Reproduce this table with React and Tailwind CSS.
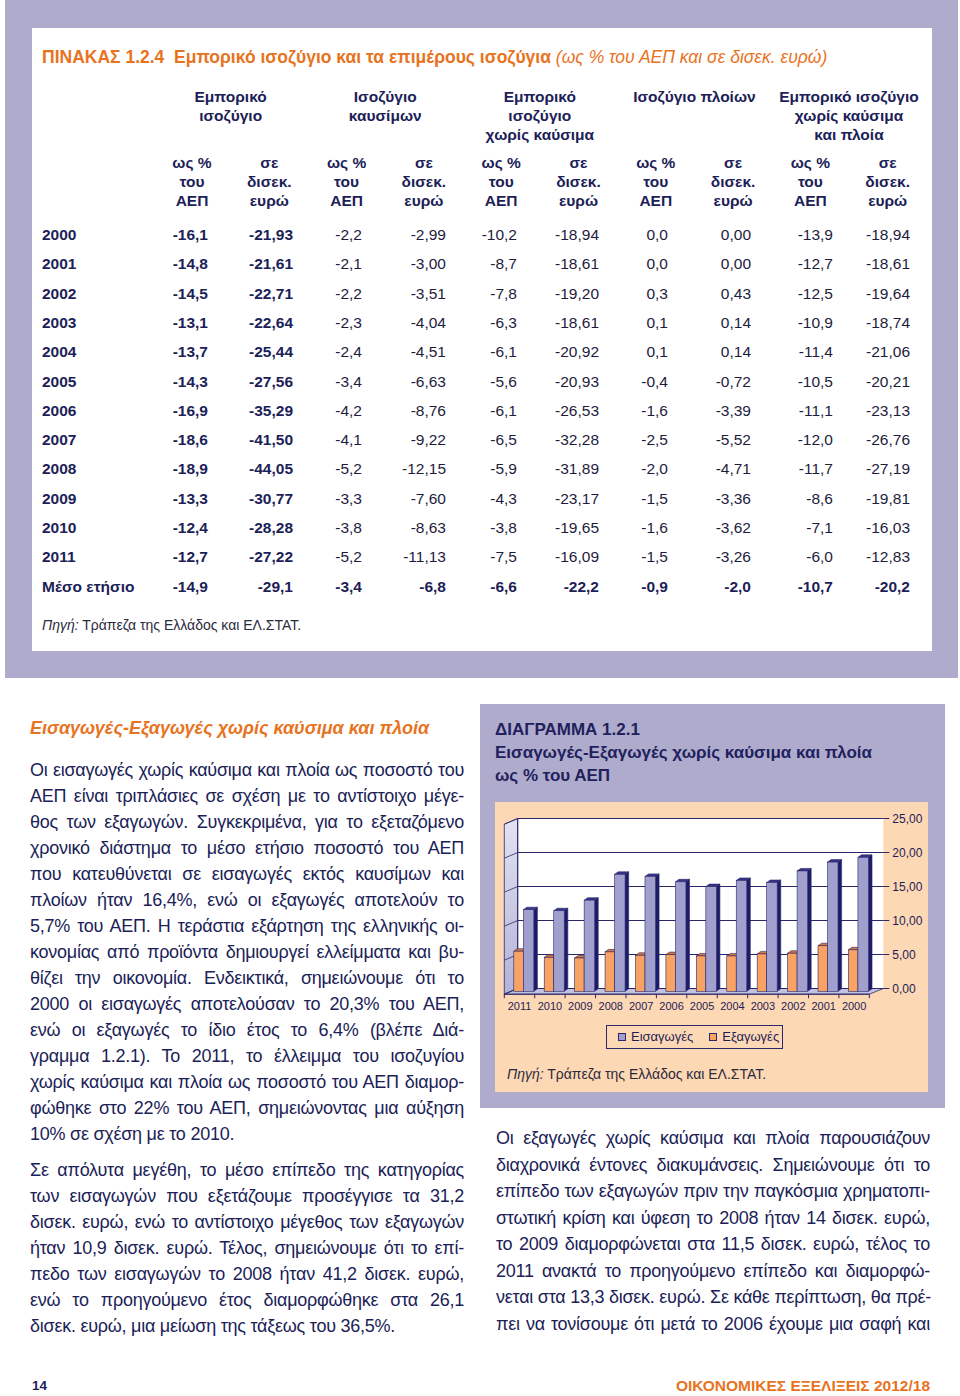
import React from 'react';

const ROWS = [
  ['2000', '-16,1', '-21,93', '-2,2', '-2,99', '-10,2', '-18,94', '0,0', '0,00', '-13,9', '-18,94'],
  ['2001', '-14,8', '-21,61', '-2,1', '-3,00', '-8,7', '-18,61', '0,0', '0,00', '-12,7', '-18,61'],
  ['2002', '-14,5', '-22,71', '-2,2', '-3,51', '-7,8', '-19,20', '0,3', '0,43', '-12,5', '-19,64'],
  ['2003', '-13,1', '-22,64', '-2,3', '-4,04', '-6,3', '-18,61', '0,1', '0,14', '-10,9', '-18,74'],
  ['2004', '-13,7', '-25,44', '-2,4', '-4,51', '-6,1', '-20,92', '0,1', '0,14', '-11,4', '-21,06'],
  ['2005', '-14,3', '-27,56', '-3,4', '-6,63', '-5,6', '-20,93', '-0,4', '-0,72', '-10,5', '-20,21'],
  ['2006', '-16,9', '-35,29', '-4,2', '-8,76', '-6,1', '-26,53', '-1,6', '-3,39', '-11,1', '-23,13'],
  ['2007', '-18,6', '-41,50', '-4,1', '-9,22', '-6,5', '-32,28', '-2,5', '-5,52', '-12,0', '-26,76'],
  ['2008', '-18,9', '-44,05', '-5,2', '-12,15', '-5,9', '-31,89', '-2,0', '-4,71', '-11,7', '-27,19'],
  ['2009', '-13,3', '-30,77', '-3,3', '-7,60', '-4,3', '-23,17', '-1,5', '-3,36', '-8,6', '-19,81'],
  ['2010', '-12,4', '-28,28', '-3,8', '-8,63', '-3,8', '-19,65', '-1,6', '-3,62', '-7,1', '-16,03'],
  ['2011', '-12,7', '-27,22', '-5,2', '-11,13', '-7,5', '-16,09', '-1,5', '-3,26', '-6,0', '-12,83'],
];
const MEAN = ['Μέσο ετήσιο', '-14,9', '-29,1', '-3,4', '-6,8', '-6,6', '-22,2', '-0,9', '-2,0', '-10,7', '-20,2'];

const GROUPS = [
  ['Εμπορικό', 'ισοζύγιο'],
  ['Ισοζύγιο', 'καυσίμων'],
  ['Εμπορικό', 'ισοζύγιο', 'χωρίς καύσιμα'],
  ['Ισοζύγιο πλοίων'],
  ['Εμπορικό ισοζύγιο', 'χωρίς καύσιμα', 'και πλοία'],
];

const LEFT_P1 = [
  'Οι εισαγωγές χωρίς καύσιμα και πλοία ως ποσοστό του',
  'ΑΕΠ είναι τριπλάσιες σε σχέση με το αντίστοιχο μέγε-',
  'θος των εξαγωγών. Συγκεκριμένα, για το εξεταζόμενο',
  'χρονικό διάστημα το μέσο ετήσιο ποσοστό του ΑΕΠ',
  'που κατευθύνεται σε εισαγωγές εκτός καυσίμων και',
  'πλοίων ήταν 16,4%, ενώ οι εξαγωγές αποτελούν το',
  '5,7% του ΑΕΠ. Η τεράστια εξάρτηση της ελληνικής οι-',
  'κονομίας από προϊόντα δημιουργεί ελλείμματα και βυ-',
  'θίζει την οικονομία. Ενδεικτικά, σημειώνουμε ότι το',
  '2000 οι εισαγωγές αποτελούσαν το 20,3% του ΑΕΠ,',
  'ενώ οι εξαγωγές το ίδιο έτος το 6,4% (βλέπε Διά-',
  'γραμμα 1.2.1). Το 2011, το έλλειμμα του ισοζυγίου',
  'χωρίς καύσιμα και πλοία ως ποσοστό του ΑΕΠ διαμορ-',
  'φώθηκε στο 22% του ΑΕΠ, σημειώνοντας μια αύξηση',
  '10% σε σχέση με το 2010.',
];
const LEFT_P2 = [
  'Σε απόλυτα μεγέθη, το μέσο επίπεδο της κατηγορίας',
  'των εισαγωγών που εξετάζουμε προσέγγισε τα 31,2',
  'δισεκ. ευρώ, ενώ το αντίστοιχο μέγεθος των εξαγωγών',
  'ήταν 10,9 δισεκ. ευρώ. Τέλος, σημειώνουμε ότι το επί-',
  'πεδο των εισαγωγών το 2008 ήταν 41,2 δισεκ. ευρώ,',
  'ενώ το προηγούμενο έτος διαμορφώθηκε στα 26,1',
  'δισεκ. ευρώ, μια μείωση της τάξεως του 36,5%.',
];
const RIGHT_P = [
  'Οι εξαγωγές χωρίς καύσιμα και πλοία παρουσιάζουν',
  'διαχρονικά έντονες διακυμάνσεις. Σημειώνουμε ότι το',
  'επίπεδο των εξαγωγών πριν την παγκόσμια χρηματοπι-',
  'στωτική κρίση και ύφεση το 2008 ήταν 14 δισεκ. ευρώ,',
  'το 2009 διαμορφώνεται στα 11,5 δισεκ. ευρώ, τέλος το',
  '2011 ανακτά το προηγούμενο επίπεδο και διαμορφώ-',
  'νεται στα 13,3 δισεκ. ευρώ. Σε κάθε περίπτωση, θα πρέ-',
  'πει να τονίσουμε ότι μετά το 2006 έχουμε μια σαφή και',
];

// chart data, years right to left as printed
const YEARS = ['2011', '2010', '2009', '2008', '2007', '2006', '2005', '2004', '2003', '2002', '2001', '2000'];
const IMP = [12.0, 11.85, 13.4, 17.2, 16.9, 16.1, 15.4, 16.3, 16.0, 17.7, 19.0, 19.7];
const EXP = [5.9, 5.0, 4.9, 5.8, 5.3, 5.4, 5.2, 5.2, 5.5, 5.6, 6.7, 6.1];

function Lines({ lines, last = true, className }) {
  return (
    <div className={className}>
      {lines.map((l, i) => (
        <div
          key={i}
          className={`whitespace-nowrap text-justify ${i === lines.length - 1 && last ? '' : '[text-align-last:justify]'}`}
        >
          {l}
        </div>
      ))}
    </div>
  );
}

function Bar({ x, w, v, front, side, top }) {
  const yb = 189.3;
  const h = v * 6.8;
  const y = yb - h;
  const dx = 3.6, dy = 2.5;
  return (
    <g stroke="#2a2868" strokeWidth="0.6">
      <polygon points={`${x + w},${y} ${x + w + dx},${y - dy} ${x + w + dx},${yb - dy} ${x + w},${yb}`} fill={side} />
      <polygon points={`${x},${y} ${x + dx},${y - dy} ${x + w + dx},${y - dy} ${x + w},${y}`} fill={top} />
      <rect x={x} y={y} width={w} height={h} fill={front} />
    </g>
  );
}

function Chart() {
  const S = 6.8, BY = 186.5, BX0 = 22.7, BX1 = 388.3, FX = 9.3, FY = 192.2, W = 30.42;
  const grid = [0, 5, 10, 15, 20, 25];
  return (
    <svg width="433" height="214" viewBox="0 0 433 214" className="block">
      <defs>
        <linearGradient id="wall" x1="0" y1="0" x2="0" y2="1">
          <stop offset="0" stopColor="#e2e2f1" />
          <stop offset="1" stopColor="#b3b2d8" />
        </linearGradient>
      </defs>
      <rect x={BX0} y={BY - 25 * S} width={BX1 - BX0} height={25 * S} fill="#ffffff" />
      <polygon points={`${FX},${BY - 25 * S + 5.7} ${BX0},${BY - 25 * S} ${BX0},${BY} ${FX},${FY}`} fill="url(#wall)" stroke="#2a2868" strokeWidth="0.8" />
      <polygon points={`${FX},${FY} ${BX0},${BY} ${BX1},${BY} ${FX + 12 * W},${FY}`} fill="#c3c2e3" stroke="#2a2868" strokeWidth="0.8" />
      {grid.map((g) => {
        const y = BY - g * S;
        return (
          <g key={g}>
            <line x1={BX0} y1={y} x2={BX1} y2={y} stroke="#2a2868" strokeWidth="1" />
            <line x1={FX} y1={y + 5.7} x2={BX0} y2={y} stroke="#2a2868" strokeWidth="0.8" />
            <line x1={BX1} y1={y} x2={BX1 + 6} y2={y} stroke="#2a2868" strokeWidth="1" />
            <text x={BX1 + 9} y={y + 4.3} fontSize="12" fill="#1f1d55" fontFamily="Liberation Sans, Arial, sans-serif">
              {g === 0 ? '0,00' : `${g},00`}
            </text>
          </g>
        );
      })}
      <line x1={BX0} y1={BY - 25 * S} x2={BX0} y2={BY} stroke="#2a2868" strokeWidth="1" />
      {YEARS.map((yr, i) => {
        const t = FX + W * i;
        return (
          <g key={yr}>
            <Bar x={t + 9.5} w={9.5} v={EXP[i]} front="#f8a263" side="#b8653a" top="#d9763f" />
            <Bar x={t + 19} w={10.5} v={IMP[i]} front="#a09fce" side="#1d1b6a" top="#35338a" />
          </g>
        );
      })}
      <line x1={FX} y1={FY} x2={FX + 12 * W} y2={FY} stroke="#2a2868" strokeWidth="1" />
      {Array.from({ length: 13 }).map((_, i) => (
        <line key={i} x1={FX + W * i} y1={FY} x2={FX + W * i} y2={FY + 4} stroke="#2a2868" strokeWidth="1" />
      ))}
      {YEARS.map((yr, i) => (
        <text key={yr} x={FX + W * (i + 0.5)} y={208} fontSize="11" textAnchor="middle" fill="#1f1d55" fontFamily="Liberation Sans, Arial, sans-serif">
          {yr}
        </text>
      ))}
    </svg>
  );
}

export default function App() {
  return (
    <div className="w-[960px] h-[1396px] bg-white text-[#201e57] font-['Liberation_Sans',Arial,sans-serif] relative overflow-hidden">
      {/* table block */}
      <section className="ml-[5px] w-[953px] bg-[#aeabcd] pt-[28px] pl-[27px] pr-[26px] pb-[27px]">
        <div className="bg-white h-[623px] pl-[10px] pt-[19px]">
          <h1 className="text-[17.5px] leading-[20px] text-[#e8731e] whitespace-nowrap">
            <span className="font-bold">ΠΙΝΑΚΑΣ 1.2.4&nbsp;&nbsp;Εμπορικό ισοζύγιο και τα επιμέρους ισοζύγια</span>{' '}
            <span className="italic">(ως % του ΑΕΠ και σε δισεκ. ευρώ)</span>
          </h1>

          <div className="grid grid-cols-[111.35px_repeat(10,77.3px)] mt-[20px] text-[15.5px] leading-[19px] font-bold text-center">
            <div />
            {GROUPS.map((g, i) => (
              <div key={i} className="col-span-2">
                {g.map((l) => (
                  <div key={l}>{l}</div>
                ))}
              </div>
            ))}
          </div>
          <div className="grid grid-cols-[111.35px_repeat(10,77.3px)] mt-[9px] text-[15.5px] leading-[19px] font-bold text-center">
            <div />
            {Array.from({ length: 5 }).map((_, i) => (
              <React.Fragment key={i}>
                <div>ως %<br />του<br />ΑΕΠ</div>
                <div>σε<br />δισεκ.<br />ευρώ</div>
              </React.Fragment>
            ))}
          </div>

          <div className="mt-[10px] text-[15.5px]">
            {ROWS.map((r) => (
              <div key={r[0]} className="grid grid-cols-[98px_68px_85px_69px_84px_71px_82px_69px_83px_82px_77px] h-[29.3px] items-center text-right">
                {r.map((c, j) => (
                  <div key={j} className={`${j === 0 ? 'text-left font-bold' : ''} ${j === 1 || j === 2 ? 'font-bold' : ''} ${j > 2 ? 'text-[#1d1c3c]' : ''}`}>
                    {c}
                  </div>
                ))}
              </div>
            ))}
            <div className="grid grid-cols-[98px_68px_85px_69px_84px_71px_82px_69px_83px_82px_77px] h-[29.3px] items-center text-right font-bold">
              {MEAN.map((c, j) => (
                <div key={j} className={j === 0 ? 'text-left whitespace-nowrap' : ''}>{c}</div>
              ))}
            </div>
          </div>

          <p className="mt-[15px] text-[14px] leading-[18px] text-[#2b2a3c]">
            <span className="italic">Πηγή:</span> Τράπεζα της Ελλάδος και ΕΛ.ΣΤΑΤ.
          </p>
        </div>
      </section>

      {/* text + chart */}
      <div className="flex mt-[26px]">
        <div className="ml-[30px] w-[434px] pt-[12px]">
          <h2 className="text-[18px] leading-[24px] font-bold italic text-[#e8731e]">
            Εισαγωγές-Εξαγωγές χωρίς καύσιμα και πλοία
          </h2>
          <Lines lines={LEFT_P1} className="mt-[17px] text-[18px] leading-[26px] tracking-[-0.25px]" />
          <Lines lines={LEFT_P2} className="mt-[10px] text-[18px] leading-[26px] tracking-[-0.25px]" />
        </div>

        <div className="ml-[16px] w-[465px]">
          <div className="bg-[#aeabcd] pt-[14px] pl-[15px] pr-[17px] pb-[16px]">
            <div className="text-[17px] leading-[23px] font-bold text-[#211f5c]">
              <div>ΔΙΑΓΡΑΜΜΑ 1.2.1</div>
              <div>Εισαγωγές-Εξαγωγές χωρίς καύσιμα και πλοία</div>
              <div>ως % του ΑΕΠ</div>
            </div>
            <div className="mt-[15px] h-[290px] bg-[#fdd8b5]">
              <Chart />
              <div className="mt-[9px] ml-[111px] w-[177px] h-[24px] border border-[#2a2868] flex items-center pl-[11px] text-[13px] text-[#1f1d55]">
                <span className="flex items-center gap-[5px]">
                  <span className="w-[8px] h-[8px] bg-[#a09fce] border border-[#2a2868]" />
                  Εισαγωγές
                </span>
                <span className="flex items-center gap-[5px] ml-[16px]">
                  <span className="w-[8px] h-[8px] bg-[#f8a263] border border-[#2a2868]" />
                  Εξαγωγές
                </span>
              </div>
              <p className="mt-[16px] ml-[12px] text-[14px] leading-[18px] text-[#2b2a3c]">
                <span className="italic">Πηγή:</span> Τράπεζα της Ελλάδος και ΕΛ.ΣΤΑΤ.
              </p>
            </div>
          </div>
          <Lines lines={RIGHT_P} last={false} className="mt-[17px] ml-[16px] w-[434px] text-[18px] leading-[26.5px] tracking-[-0.25px]" />
        </div>
      </div>

      {/* footer */}
      <div className="absolute left-[32px] right-[30px] top-[1377px] flex justify-between items-center text-[15.5px] leading-[18px] font-bold">
        <span className="text-[#201e57] text-[13.5px]">14</span>
        <span className="text-[#e8731e]">ΟΙΚΟΝΟΜΙΚΕΣ ΕΞΕΛΙΞΕΙΣ 2012/18</span>
      </div>
    </div>
  );
}
